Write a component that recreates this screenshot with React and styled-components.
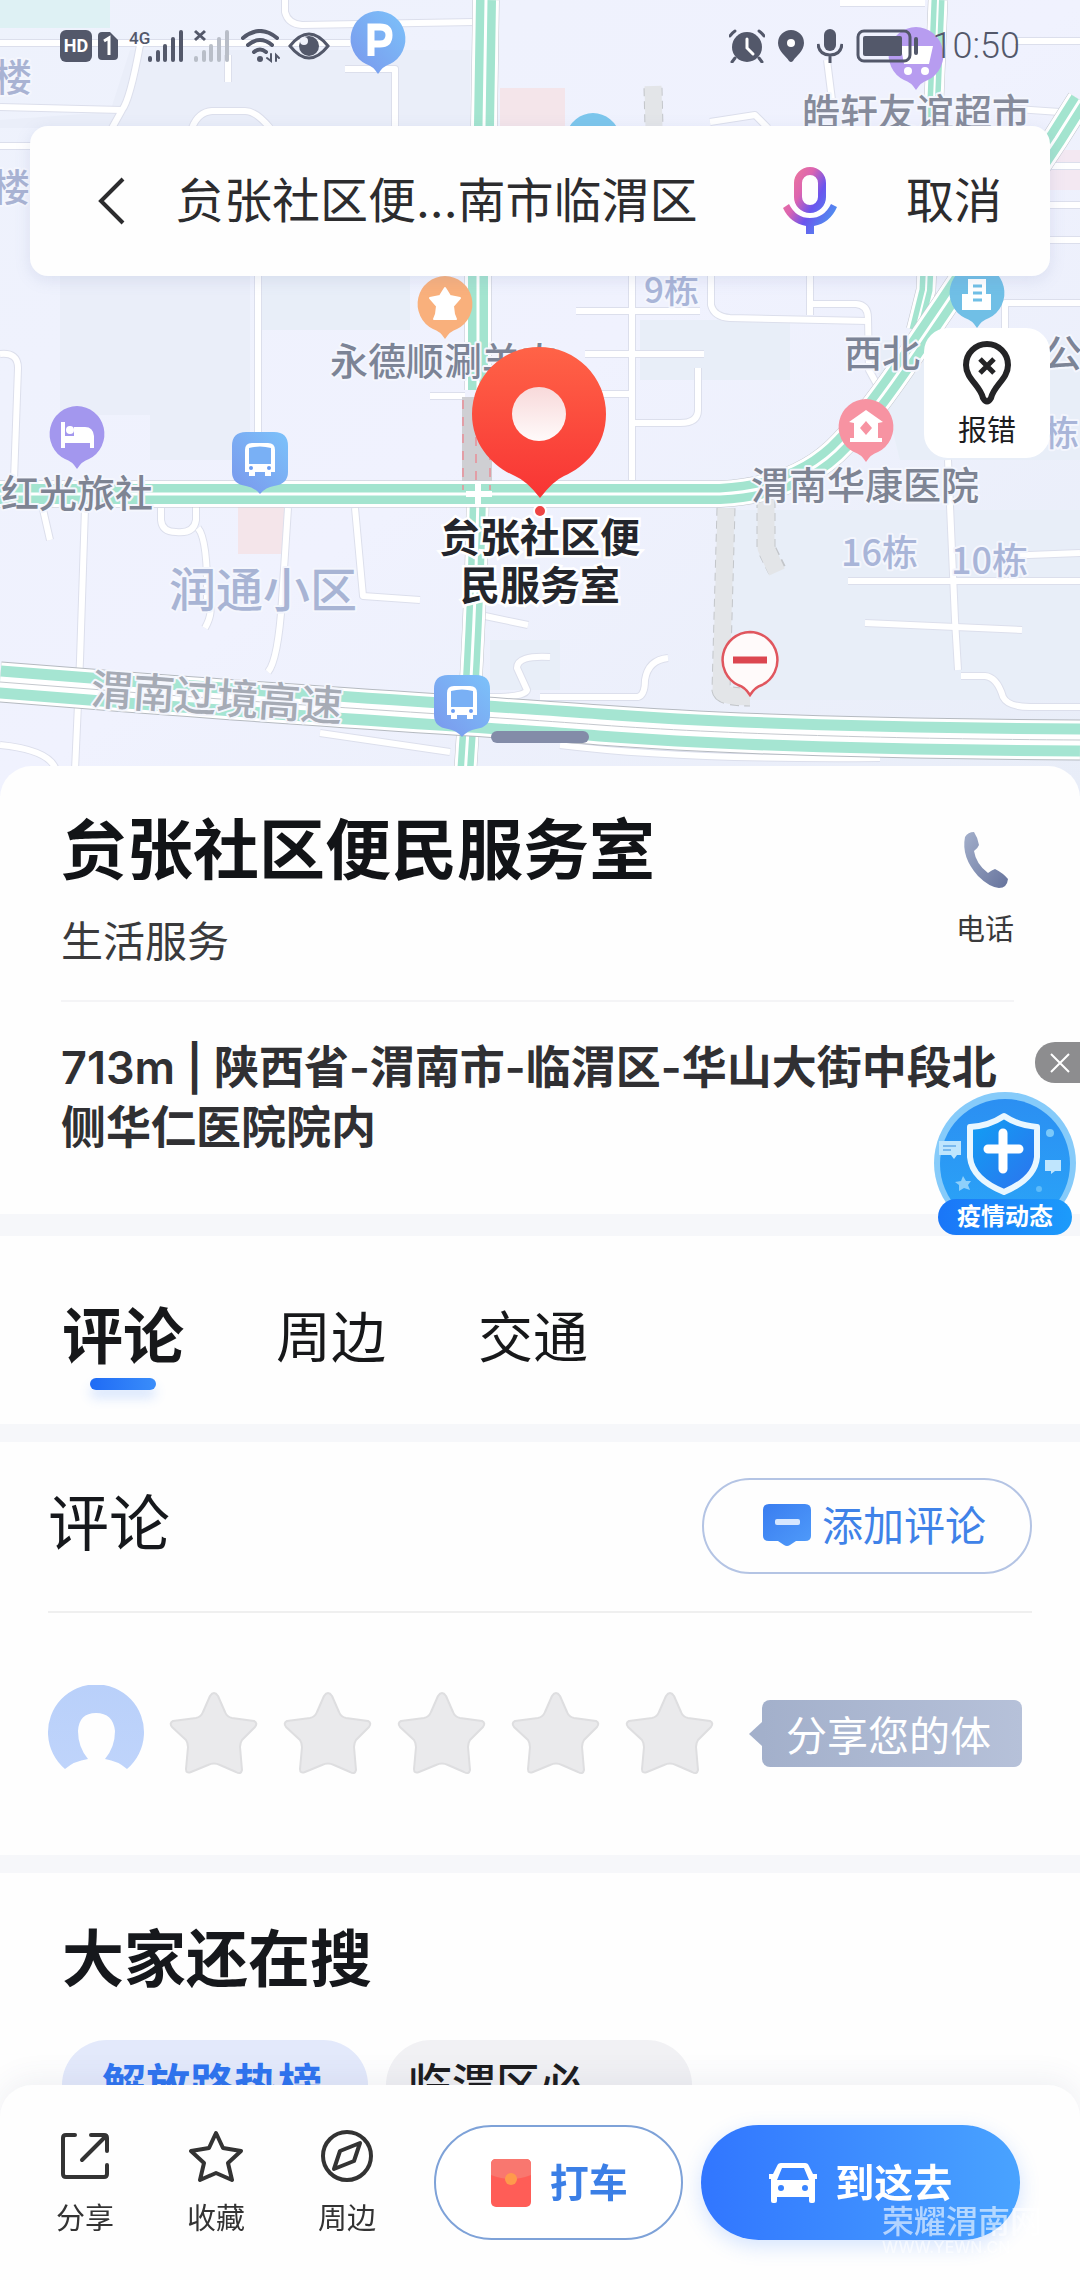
import React, { useState } from 'react'
import styled, { createGlobalStyle } from 'styled-components'

const GlobalStyle = createGlobalStyle`
  * {
    box-sizing: border-box;
  }
  body {
    margin: 0;
    background: #fff;
    color: #16181c;
    font-family: Inter, "Noto Sans CJK SC", sans-serif;
  }
  button, input {
    font-family: inherit;
    color: inherit;
    border: none;
    background: none;
    padding: 0;
    margin: 0;
  }
  button {
    cursor: pointer;
  }
  svg {
    display: block;
    flex-shrink: 0;
  }
  h1, h2, p {
    margin: 0;
  }
`

const Page = styled.div`
  min-height: 100vh;
  padding-bottom: 148px;
  overflow-x: hidden;
`

/* map */

const MapArea = styled.header`
  position: relative;
  display: flex;
  flex-direction: column;
  min-height: 796px;
`
const MapCanvas = styled.svg`
  position: absolute;
  inset: 0;
  width: 100%;
  height: 100%;
  z-index: -1;
`
const StatusBar = styled.div`
  display: flex;
  align-items: center;
  justify-content: space-between;
  height: 92px;
  padding: 0 60px;
  color: #53586a;
`
const StatusGroup = styled.div`
  display: flex;
  align-items: center;
  gap: ${({ $gap }) => $gap}px;
`
const Clock = styled.span`
  font-family: Roboto, sans-serif;
  font-size: 36px;
  font-weight: 300;
  line-height: 36px;
`
const SearchBar = styled.form`
  display: flex;
  align-items: center;
  height: 150px;
  margin: 34px 30px 0;
  padding: 0 48px 0 64px;
  border-radius: 18px;
  background: #fefefe;
  box-shadow: 0 4px 16px rgba(120, 130, 180, 0.16);
`
const SearchInput = styled.input`
  flex: 1;
  min-width: 0;
  margin-left: 48px;
  font-size: 48px;
  line-height: 72px;
  height: 72px;
  color: #2c2c2e;
  outline: none;
`
const IconButton = styled.button`
  display: block;
`
const CancelButton = styled.button`
  margin-left: 68px;
  font-size: 48px;
  line-height: 72px;
  color: #2c2c2e;
`
const ReportButton = styled.button`
  display: flex;
  flex-direction: column;
  align-items: center;
  align-self: flex-end;
  width: 126px;
  height: 130px;
  margin: 52px 30px 0 0;
  padding-top: 13px;
  border-radius: 24px;
  background: #fff;
  font-size: 29px;
  line-height: 36px;
  gap: 8px;
  color: #1c1c1e;
`
const DragHandle = styled.div`
  position: absolute;
  left: 50%;
  bottom: 53px;
  width: 98px;
  height: 12px;
  margin-left: -49px;
  border-radius: 6px;
  background: #838ca8;
`

/* sheet */

const Sheet = styled.main`
  position: relative;
  margin-top: -30px;
  border-radius: 32px 32px 0 0;
  background: #fefefe;
`
const Band = styled.div`
  height: ${({ $tall }) => ($tall ? 22 : 18)}px;
  background: #f6f7fa;
`
const Info = styled.section`
  position: relative;
  padding: 44px 66px 56px 61px;
`
const InfoTop = styled.div`
  display: flex;
  justify-content: space-between;
  padding-bottom: 30px;
  border-bottom: 2px solid #f4f4f6;
`
const Title = styled.h1`
  font-size: 66px;
  line-height: 80px;
  font-weight: 700;
  color: #121417;
`
const Category = styled.p`
  margin-top: 24px;
  font-size: 42px;
  line-height: 56px;
  color: #3a3a3c;
`
const PhoneButton = styled.button`
  display: flex;
  flex-direction: column;
  align-items: center;
  align-self: flex-start;
  gap: 22px;
  padding-top: 20px;
  font-size: 29px;
  line-height: 36px;
  color: #3a3a3c;
`
const Address = styled.p`
  padding-top: 36px;
  font-size: 45px;
  line-height: 60px;
  font-weight: 600;
  color: #303033;
`
const Floating = styled.aside`
  position: absolute;
  top: 276px;
  right: 0;
  display: flex;
  flex-direction: column;
  align-items: flex-end;
  gap: 8px;
`
const CloseButton = styled.button`
  display: flex;
  align-items: center;
  justify-content: center;
  width: 45px;
  height: 41px;
  padding-left: 4px;
  border-radius: 20px 0 0 20px;
  background: #8d8d8f;
`
const EpidemicButton = styled.button`
  display: flex;
  flex-direction: column;
  align-items: center;
  margin-right: 3px;
`
const EpidemicLabel = styled.span`
  position: relative;
  margin-top: -38px;
  width: 134px;
  border-radius: 18px;
  background: linear-gradient(90deg, #1a76f8, #1c9bfb);
  color: #fff;
  font-size: 24px;
  line-height: 36px;
  font-weight: 700;
`

const Tabs = styled.nav`
  display: flex;
  align-items: flex-start;
  gap: 92px;
  padding: 60px 62px 34px;
`
const Tab = styled.button`
  display: flex;
  flex-direction: column;
  align-items: center;
  height: 94px;
  font-size: ${({ $active }) => ($active ? 61 : 55)}px;
  font-weight: ${({ $active }) => ($active ? 700 : 400)};
  line-height: 82px;
  color: #17181a;
  &::after {
    content: "";
    display: ${({ $active }) => ($active ? 'block' : 'none')};
    width: 66px;
    height: 12px;
    border-radius: 6px;
    background: linear-gradient(90deg, #1f6bf5, #3a8dfa);
    box-shadow: 0 8px 12px rgba(58, 130, 250, 0.2);
  }
`

const ReviewHead = styled.div`
  display: flex;
  align-items: center;
  justify-content: space-between;
  margin: 0 48px;
  padding: 36px 0 37px;
  border-bottom: 2px solid #efefef;
`
const ReviewTitle = styled.h2`
  padding-bottom: 4px;
  font-size: 61px;
  line-height: 80px;
  font-weight: 400;
`
const AddReview = styled.button`
  display: flex;
  align-items: center;
  justify-content: center;
  gap: 10px;
  width: 330px;
  height: 96px;
  padding-left: 14px;
  border: 2px solid #b4c4e4;
  border-radius: 48px;
  font-size: 41px;
  line-height: 56px;
  color: #3f82e8;
`
const RatingRow = styled.div`
  display: flex;
  align-items: center;
  gap: 24px;
  padding: 72px 58px 74px 48px;
`
const StarButton = styled.button`
  display: block;
  width: 90px;
`
const Hint = styled.span`
  position: relative;
  margin-left: auto;
  padding: 6px 31px 0 24px;
  border-radius: 8px;
  background: linear-gradient(90deg, #a3b0cb, #b6c1d9);
  color: #fff;
  font-size: 41px;
  line-height: 61px;
  white-space: nowrap;
  &::before {
    content: "";
    position: absolute;
    left: -13px;
    top: 22px;
    border: 12px solid transparent;
    border-left: none;
    border-right: 13px solid #a3b0cb;
  }
`

const More = styled.section`
  padding: 47px 62px 0;
`
const MoreTitle = styled.h2`
  font-size: 62px;
  line-height: 80px;
  font-weight: 700;
`
const Chips = styled.div`
  display: flex;
  gap: 18px;
  margin-top: 40px;
`
const Chip = styled.button`
  min-width: 306px;
  height: 90px;
  padding: 0 ${({ $hot }) => ($hot ? 40 : 22)}px;
  border-radius: 45px;
  background: ${({ $hot }) => ($hot ? '#e3e9fb' : '#f1f1f4')};
  color: ${({ $hot }) => ($hot ? '#2f74f0' : '#1c1c1e')};
  font-size: 44px;
  font-weight: ${({ $hot }) => ($hot ? 700 : 500)};
  line-height: 90px;
  text-align: left;
  white-space: nowrap;
`

/* bottom bar */

const BottomBar = styled.footer`
  position: fixed;
  left: 0;
  right: 0;
  bottom: 0;
  display: flex;
  align-items: center;
  padding: 40px 60px 40px 56px;
  border-radius: 32px 32px 0 0;
  background: #fefefe;
  box-shadow: 0 -6px 30px rgba(60, 80, 110, 0.08);
`
const Actions = styled.div`
  display: flex;
  gap: 73px;
  margin-right: 58px;
`
const Action = styled.button`
  display: flex;
  flex-direction: column;
  align-items: center;
  gap: 18px;
  font-size: 29px;
  line-height: 36px;
  color: #333;
`
const Pills = styled.div`
  display: flex;
  flex: 1;
  gap: 18px;
`
const Pill = styled.button`
  display: flex;
  flex: ${({ $primary }) => ($primary ? 318 : 248)} 1 0;
  align-items: center;
  justify-content: center;
  gap: 18px;
  height: 115px;
  border: 2px solid ${({ $primary }) => ($primary ? 'transparent' : '#7ea2d8')};
  border-radius: 58px;
  background: ${({ $primary }) => ($primary ? 'linear-gradient(90deg, #3176ff, #49a3ff) border-box' : '#fff')};
  box-shadow: ${({ $primary }) => ($primary ? '0 6px 20px rgba(60, 130, 255, 0.22)' : 'none')};
  color: ${({ $primary }) => ($primary ? '#fff' : '#3b7fe6')};
  font-size: 39px;
  line-height: 56px;
  font-weight: 700;
  white-space: nowrap;
`
const Watermark = styled.div`
  position: absolute;
  right: 38px;
  bottom: 26px;
  color: rgba(255, 255, 255, 0.6);
  font-size: 32px;
  font-weight: 500;
  line-height: 36px;
  pointer-events: none;
`
const WatermarkUrl = styled.div`
  font-size: 16px;
  line-height: 14px;
`

const sideRoads = [
  'M285 0 V12 Q288 24 302 25 L475 22',
  'M0 43 H350',
  'M140 45 Q130 100 122 110 L112 128',
  'M0 107 L122 110',
  'M0 146 H40',
  'M228 55 V82',
  'M192 128 Q198 112 212 111 H245 Q256 111 270 128',
  'M345 69 H395 V128',
  'M258 275 V440',
  'M0 354 Q18 352 18 368 L14 480',
  'M430 396 H465',
  'M42 505 L50 540',
  'M85 508 L80 660 L75 770',
  'M161 508 V520 Q162 532 176 532 Q194 534 196 520 V506',
  'M198 528 Q208 540 207 600 Q215 610 205 628',
  'M288 508 L282 600 Q278 660 268 672',
  'M355 508 L363 596 L420 600',
  'M0 745 Q50 750 56 770',
  'M320 733 L450 752',
  'M485 616 L528 625',
  'M550 657 Q517 655 517 668 L527 690 Q526 696 500 697 H460',
  'M540 697 H638 Q645 695 645 680 Q648 660 668 658',
  'M632 270 V480',
  'M576 311 H700',
  'M585 354 H704',
  'M600 394 H632',
  'M698 368 V410 Q698 423 680 423 H635',
  'M711 270 V305 Q714 317 730 318 L868 321',
  'M810 270 V315',
  'M813 304 H856 Q868 305 868 318 L869 370 L880 390',
  'M1005 330 V303 H1080',
  'M948 460 L955 620 L958 670',
  'M848 581 H1080',
  'M1000 556 L1080 553',
  'M865 623 L1022 630',
  'M961 676 H985 Q997 677 1003 697 Q1008 707 1030 707 H1080',
  'M560 745 Q680 760 880 758',
  'M840 3 H925',
  'M827 60 L832 100',
  'M1015 41 H1080',
  'M1000 108 L1060 112',
  'M1050 166 H1080',
  'M1050 205 H1080',
  'M1050 240 H1080',
  'M710 122 L755 115 L768 128',
]

const greenRoads = [
  { d: 'M486 0 L484 126 L478 276 V390', w: 22 },
  { d: 'M478 490 Q476 620 464 790', w: 18 },
  { d: 'M938 0 L934 100 L926 290 L916 330', w: 15 },
  { d: 'M0 494 L720 494 Q800 490 843 443 Q870 415 912 353 L946 303 L1056 138 L1080 100', w: 22 },
]

const Road = ({ d, w }) => (
  <g fill="none">
    <path d={d} stroke="#c2c6ce" strokeWidth={w + 5} />
    <path d={d} stroke="#fff" strokeWidth={w + 4} />
    <path d={d} stroke="#a3e4cf" strokeWidth={w - 2} />
    <path d={d} stroke="#fff" strokeWidth={w > 16 ? 3 : 2} />
  </g>
)

const pinPath = 'M0 -28 A28 28 0 0 1 12 25 Q5 27 0 35 Q-5 27 -12 25 A28 28 0 0 1 0 -28Z'

const Pin = ({ x, y, fill, children }) => (
  <g transform={`translate(${x} ${y})`}>
    <path d={pinPath} fill={fill} />
    {children}
  </g>
)

const BusStop = ({ x, y }) => (
  <g transform={`translate(${x} ${y})`}>
    <path d="M-14 -28 H14 Q28 -28 28 -14 V12 Q28 24 14 26 Q6 27 0 34 Q-6 27 -14 26 Q-28 24 -28 12 V-14 Q-28 -28 -14 -28Z" fill="url(#bus)" />
    <path d="M-15 -10 Q-15 -17 -8 -17 H8 Q15 -17 15 -10 V12 H11 V16 H5 V12 H-5 V16 H-11 V12 H-15Z" fill="#fff" />
    <path d="M-11 -12 Q0 -15 11 -12 V4 H-11Z" fill="#79b0f5" />
    <circle cx="-9" cy="8" r="2" fill="#6a9cf2" />
    <circle cx="9" cy="8" r="2" fill="#6a9cf2" />
  </g>
)

const labels = [
  { x: -6, y: 91, t: '楼', s: 38, c: '#a9b3d3' },
  { x: -8, y: 201, t: '楼', s: 38, c: '#a9b3d3' },
  { x: 802, y: 126, t: '皓轩友谊超市', s: 38, c: '#868b9b' },
  { x: 644, y: 303, t: '9栋', s: 35, c: '#a9b5d8' },
  { x: 330, y: 375, t: '永德顺涮羊肉', s: 38, c: '#7c8496' },
  { x: 844, y: 367, t: '西北', s: 38, c: '#7c8496' },
  { x: 1044, y: 367, t: '公司', s: 38, c: '#7c8496' },
  { x: 1044, y: 446, t: '栋', s: 35, c: '#a9b5d8' },
  { x: 751, y: 499, t: '渭南华康医院', s: 38, c: '#7e8493' },
  { x: 1, y: 507, t: '红光旅社', s: 38, c: '#7e8493' },
  { x: 169, y: 607, t: '润通小区', s: 47, c: '#a8b4d4' },
  { x: 841, y: 566, t: '16栋', s: 36, c: '#a9b5d8' },
  { x: 951, y: 574, t: '10栋', s: 36, c: '#a9b5d8' },
]

const CityMap = () => (
  <MapCanvas viewBox="0 0 1080 796" preserveAspectRatio="xMidYMin slice" aria-hidden="true">
    <defs>
      <linearGradient id="red" x1="0" y1="0" x2="0" y2="1">
        <stop offset="0" stopColor="#ff6347" />
        <stop offset="1" stopColor="#f83434" />
      </linearGradient>
      <linearGradient id="hole" x1="0" y1="0" x2="0" y2="1">
        <stop offset="0" stopColor="#f8d9da" />
        <stop offset="1" stopColor="#fffafa" />
      </linearGradient>
      <linearGradient id="bus" x1="1" y1="0" x2="0" y2="1">
        <stop offset="0" stopColor="#7cc2fa" />
        <stop offset="1" stopColor="#7a97ec" />
      </linearGradient>
      <linearGradient id="land" x1="0" y1="0" x2="1" y2="1">
        <stop offset="0" stopColor="#eef2fc" />
        <stop offset="0.5" stopColor="#f0f2fe" />
        <stop offset="1" stopColor="#e8edf8" />
      </linearGradient>
    </defs>
    <rect width="1080" height="796" fill="url(#land)" />
    <rect width="110" height="28" fill="#def1f4" />
    <path d="M60 276 H250 V460 H150 V415 H60Z M0 120 L110 112 L130 50 H470 V128 H0Z" fill="#eaeef9" />
    <path d="M262 276 H410 V330 H262Z M640 320 H790 V380 H640Z M720 510 H1080 V700 H720Z M870 340 H1080 V460 H900Z M490 640 H560 V690 H490Z" fill="#e8eef8" />
    <path d="M500 88 H565 V128 H500Z M238 506 H284 V554 H238Z" fill="#f4e5ea" />
    <path d="M1050 150 H1080 V190 H1050Z" fill="#f3e8f2" />

    <g fill="none" strokeLinejoin="round">
      {sideRoads.map((d) => <path key={d} d={d} stroke="#dcdfec" strokeWidth="8" />)}
      {sideRoads.map((d) => <path key={d} d={d} stroke="#fff" strokeWidth="6" />)}
    </g>

    <g fill="none" strokeLinejoin="round">
      <path d="M726 508 L721 690 Q722 697 750 697 M766 500 V548 L777 570 M653 88 L654 128" stroke="#c3c6ca" strokeWidth="19" strokeDasharray="8 5" />
      <path d="M726 508 L721 690 Q722 697 750 697 M766 500 V548 L777 572 M653 86 L654 128" stroke="#e3e5e8" strokeWidth="17" />
    </g>

    <path d="M477 397 V490" stroke="#cfcfd3" strokeWidth="30" />
    {greenRoads.map((r) => <Road key={r.d} {...r} />)}
    <path d="M463 400 V490 M476 420 V490 M490 400 V490" stroke="#e98f98" strokeWidth="1.5" strokeDasharray="9 8" />
    <path d="M466 494 H492 M478 484 V506" stroke="#fff" strokeWidth="6" />

    <g fill="none">
      {[['#b5bac0', 41], ['#fff', 39], ['#a5e5d2', 33], ['#fff', 11], ['#c5c9ce', 1]].map(([c, w]) => (
        <path key={w} d="M0 682 L90 689 C300 706 480 716 600 725 S900 739 1080 740" stroke={c} strokeWidth={w} />
      ))}
    </g>

    <g fontFamily="'Noto Sans CJK SC', sans-serif" fontWeight="500" stroke="#f4f6fd" strokeWidth="4" paintOrder="stroke" strokeLinejoin="round">
      {labels.map(({ x, y, t, s, c }) => (
        <text key={`${t}${x}${y}`} x={x} y={y} fontSize={s} fill={c}>{t}</text>
      ))}
      <text x="90" y="704" fontSize="42" fill="#a6abb5" transform="rotate(4 90 704)">渭南过境高速</text>
    </g>

    <Pin x={378} y={39} fill="url(#bus)">
      <path d="M-7 17 V-12 H2 Q11 -12 11 -4 Q11 5 2 5 H-7" fill="none" stroke="#fff" strokeWidth="7" />
    </Pin>
    <Pin x={916} y={55} fill="#b79cf0">
      <path d="M-23 -13 H-16 L-12 9 H13 L17 -9 H-14Z" fill="#fff" />
      <circle cx="-8" cy="16" r="4" fill="#fff" />
      <circle cx="9" cy="16" r="4" fill="#fff" />
    </Pin>
    <Pin x={593} y={141} fill="#7cc6ec" />
    <Pin x={445} y={304} fill="#f9b07c">
      <path d="M0 -16 L5 -8 L15 -6 L8 2 L9 10 L11 15 H-11 L-9 10 L-8 2 L-15 -6 L-5 -8Z" fill="#fff" stroke="#fff" strokeWidth="2" strokeLinejoin="round" />
    </Pin>
    <Pin x={977} y={293} fill="#70bfe6">
      <path d="M-9 -14 H9 V1 H14 V17 H-15 V1 H-9Z" fill="#fff" />
      <path d="M-4 -7 H5 M-4 0 H5 M-4 7 H5" stroke="#70bfe6" strokeWidth="3" />
    </Pin>
    <Pin x={77} y={434} fill="#a397ee">
      <path d="M-14 -12 V14 M15 14 V4" stroke="#fff" strokeWidth="4" />
      <path d="M-15 9 V2 H-3 V-7 H8 Q16 -7 17 2 V9Z" fill="#fff" />
      <circle cx="-7" cy="-4" r="4" fill="#fff" />
    </Pin>
    <Pin x={866} y={427} fill="#f793a2">
      <path d="M-17 -5 L0 -17 L17 -5 L12 -4 V11 H16 V15 H-16 V11 H-12 V-4Z" fill="#fff" />
      <path d="M0 -6 L6 1 L0 8 L-6 1Z" fill="#f793a2" />
    </Pin>
    <BusStop x={260} y={460} />
    <BusStop x={462} y={703} />
    <g transform="translate(750 660)">
      <path d={pinPath} fill="#fffafa" stroke="#e0565e" strokeWidth="2.5" />
      <path d="M-17 0 H17" stroke="#dc4650" strokeWidth="7" />
    </g>

    <path d="M539 347 A67 67 0 0 1 606 414 C606 446 585 467 564 476 Q553 481 540 498 Q527 481 515 476 C494 467 472 446 472 414 A67 67 0 0 1 539 347Z" fill="url(#red)" />
    <circle cx="539" cy="414" r="27" fill="url(#hole)" />
    <circle cx="540" cy="511" r="6" fill="#ee4444" stroke="#fff" strokeWidth="2" />
    <g fontFamily="'Noto Sans CJK SC', sans-serif" fontWeight="700" fontSize="40" fill="#24262c" stroke="#fff" strokeWidth="5" paintOrder="stroke" textAnchor="middle">
      <text x="540" y="552">贠张社区便</text>
      <text x="540" y="600">民服务室</text>
    </g>
  </MapCanvas>
)

const bars = [[0, 27, 6], [8, 21, 12], [15, 15, 18], [23, 8, 25], [31, 1, 32]]

const SignalBars = ({ x, color }) => (
  <g transform={`translate(${x} 0)`} fill={color}>
    {bars.map(([left, top, h]) => <rect key={left} x={left} y={top} width="4" height={h} rx="2" />)}
  </g>
)

const Status = () => (
  <StatusBar>
    <StatusGroup $gap={6}>
      <svg width="32" height="32" viewBox="0 0 32 32">
        <rect width="32" height="32" rx="6" fill="currentColor" />
        <text x="16" y="22" fontFamily="Roboto, sans-serif" fontSize="18" fontWeight="700" fill="#fff" textAnchor="middle">HD</text>
      </svg>
      <svg width="20" height="28" viewBox="0 0 20 28">
        <path d="M4 0 H12 L20 8 V24 Q20 28 16 28 H4 Q0 28 0 24 V4 Q0 0 4 0Z" fill="currentColor" />
        <path d="M6 9 L11 6 V23" stroke="#fff" strokeWidth="3" fill="none" />
      </svg>
      <svg width="60" height="34" viewBox="0 0 60 34">
        <text x="5" y="15" fontFamily="Roboto, sans-serif" fontSize="17" fontWeight="500" fill="currentColor">4G</text>
        <SignalBars x={24} color="currentColor" />
      </svg>
      <svg width="44" height="34" viewBox="0 0 44 34">
        <path d="M5 2 L15 11 M15 2 L5 11" stroke="currentColor" strokeWidth="3" />
        <SignalBars x={4} color="#b9bec8" />
      </svg>
      <svg width="42" height="34" viewBox="0 0 42 34" fill="none" stroke="currentColor" strokeWidth="4" strokeLinecap="round">
        <path d="M3 9 Q20 -5 37 9 M8 16 Q20 6 32 16 M14 23 Q20 18 26 23" />
        <circle cx="20" cy="30" r="3" fill="currentColor" stroke="none" />
        <path d="M31 25 V32 L27 29 M36 32 V26 L39 29" strokeWidth="2" />
      </svg>
      <svg width="42" height="28" viewBox="0 0 42 28">
        <path d="M2 14 Q21 -10 40 14 Q21 38 2 14Z" fill="none" stroke="currentColor" strokeWidth="3" />
        <circle cx="21" cy="14" r="10" fill="currentColor" />
        <circle cx="16" cy="9" r="4" fill="#f0f2fb" />
      </svg>
    </StatusGroup>
    <StatusGroup $gap={13}>
      <svg width="36" height="34" viewBox="0 0 36 34" fill="none" stroke="currentColor" strokeLinecap="round">
        <circle cx="18" cy="18" r="15" fill="currentColor" stroke="none" />
        <path d="M1 7 Q3 4 6 2 M35 7 Q33 4 30 2 M6 29 L3 33 M30 29 L33 33" strokeWidth="3" />
        <path d="M18 10 V19 L24 25" stroke="#fff" strokeWidth="3" />
      </svg>
      <svg width="26" height="32" viewBox="0 0 26 32">
        <path d="M13 0 A13 13 0 0 1 26 13 C26 21 18 26 15 31 Q13 33 11 31 C8 26 0 21 0 13 A13 13 0 0 1 13 0Z" fill="currentColor" />
        <circle cx="13" cy="13" r="4" fill="#fff" />
      </svg>
      <svg width="26" height="34" viewBox="0 0 26 34">
        <rect x="7" y="0" width="12" height="22" rx="6" fill="currentColor" />
        <path d="M1 15 Q2 26 13 26 Q24 26 25 15 M13 26 V34" fill="none" stroke="currentColor" strokeWidth="3" />
      </svg>
      <svg width="64" height="34" viewBox="0 0 64 34">
        <rect x="2" y="2" width="52" height="30" rx="6" fill="none" stroke="currentColor" strokeWidth="3" />
        <rect x="7" y="7" width="39" height="20" rx="2" fill="currentColor" />
        <rect x="58" y="8" width="4" height="18" rx="2" fill="currentColor" />
      </svg>
      <Clock>10:50</Clock>
    </StatusGroup>
  </StatusBar>
)

const Star = () => (
  <svg width="90" height="86" viewBox="0 0 90 86">
    <path d="M42 6 Q46 0 50 6 L57 22 Q59 27 64 28 L86 31 Q90 33 87 37 L74 50 Q72 53 72 57 L74 80 Q73 85 68 82 L52 75 Q46 72 40 75 L23 82 Q18 84 18 79 L20 57 Q20 53 18 50 L4 37 Q1 33 5 31 L28 28 Q33 27 35 22Z" fill="#eaeaec" stroke="#dedee0" strokeWidth="2" strokeLinejoin="round" />
  </svg>
)

const EpidemicIcon = () => (
  <svg width="144" height="146" viewBox="0 0 144 146">
    <defs>
      <linearGradient id="ball" x1="0" y1="0" x2="0" y2="1">
        <stop offset="0" stopColor="#2b8ff2" />
        <stop offset="1" stopColor="#2aa5f8" />
      </linearGradient>
      <linearGradient id="shield" x1="0" y1="0" x2="1" y2="1">
        <stop offset="0" stopColor="#10a0f4" />
        <stop offset="1" stopColor="#2d72ee" />
      </linearGradient>
    </defs>
    <circle cx="72" cy="72" r="71" fill="#86cbfa" />
    <circle cx="72" cy="73" r="65" fill="url(#ball)" />
    <path d="M71 25 Q86 35 104 36 V66 Q102 88 71 101 Q39 88 37 66 V36 Q56 35 71 25Z" fill="url(#shield)" stroke="#e9f7ff" strokeWidth="6" strokeLinejoin="round" />
    <path d="M70 42 V78 M55 58 H86" stroke="#fff" strokeWidth="9" strokeLinecap="round" />
    <path d="M6 50 H28 V64 H24 L21 68 L18 64 H6Z M112 69 H128 V80 H122 L118 83 V80 H112Z" fill="#bfe5fd" />
    <path d="M10 55 H23 M10 59 H18" stroke="#79b9ee" strokeWidth="2" />
    <path d="M30 85 L33 90 L38 90 L35 94 L37 99 L31 97 L26 100 L26 94 L22 91 L28 90Z" fill="#8ed0fb" />
    <circle cx="117" cy="42" r="4" fill="#7cc9fa" />
    <circle cx="106" cy="98" r="3" fill="#5fbcf9" />
  </svg>
)

const tabs = ['评论', '周边', '交通']

const App = () => {
  const [tab, setTab] = useState('评论')
  const [showFloat, setShowFloat] = useState(true)

  return (
    <Page>
      <GlobalStyle />
      <MapArea>
        <CityMap />
        <Status />
        <SearchBar onSubmit={(e) => e.preventDefault()}>
          <IconButton type="button" aria-label="返回">
            <svg width="34" height="50" viewBox="0 0 34 50">
              <path d="M29 3 L7 25 L29 47" fill="none" stroke="#2c2c2e" strokeWidth="4" />
            </svg>
          </IconButton>
          <SearchInput aria-label="搜索" defaultValue="贠张社区便...南市临渭区" />
          <IconButton type="button" aria-label="语音">
            <svg width="56" height="68" viewBox="0 0 56 68">
              <defs>
                <linearGradient id="mic" x1="0" y1="0.1" x2="1" y2="0.8">
                  <stop offset="0" stopColor="#f27d92" />
                  <stop offset="0.35" stopColor="#dc64b0" />
                  <stop offset="0.6" stopColor="#6a55ee" />
                  <stop offset="1" stopColor="#4a9af0" />
                </linearGradient>
              </defs>
              <path fillRule="evenodd" d="M28 0 A16 16 0 0 1 44 16 V30 A16 16 0 0 1 12 30 V16 A16 16 0 0 1 28 0Z M28 8 A8 8 0 0 0 20 16 V30 A8 8 0 0 0 36 30 V16 A8 8 0 0 0 28 8Z M1 41 L7 37 Q14 51 28 51 Q42 51 49 37 L55 40 Q48 56 32 59 V67 H24 V59 Q8 56 1 41Z" fill="url(#mic)" />
            </svg>
          </IconButton>
          <CancelButton type="button">取消</CancelButton>
        </SearchBar>
        <ReportButton>
          <svg width="50" height="64" viewBox="0 0 50 64" fill="none" stroke="#242426" strokeLinejoin="round">
            <path d="M25 3 A21 21 0 0 1 46 24 C46 38 32 44 29 57 Q25 64 21 57 C18 44 4 38 4 24 A21 21 0 0 1 25 3Z" strokeWidth="6" />
            <path d="M18 18 L32 32 M32 18 L18 32" strokeWidth="5" />
          </svg>
          报错
        </ReportButton>
        <DragHandle />
      </MapArea>

      <Sheet>
        <Info>
          <InfoTop>
            <div>
              <Title>贠张社区便民服务室</Title>
              <Category>生活服务</Category>
            </div>
            <PhoneButton>
              <svg width="48" height="60" viewBox="0 0 48 60">
                <defs>
                  <linearGradient id="phone" x1="0" y1="0" x2="1" y2="1">
                    <stop offset="0" stopColor="#a3afcb" />
                    <stop offset="1" stopColor="#66739c" />
                  </linearGradient>
                </defs>
                <path d="M4 7 Q7 2 13 2 Q17 8 18 15 Q17 18 13 21 Q15 34 27 43 Q31 40 34 39 Q42 43 47 49 Q46 58 38 58 Q28 57 17 46 Q0 27 4 7Z" fill="url(#phone)" />
              </svg>
              电话
            </PhoneButton>
          </InfoTop>
          <Address>713m | 陕西省-渭南市-临渭区-华山大街中段北侧华仁医院院内</Address>
          {showFloat && (
            <Floating>
              <CloseButton aria-label="关闭" onClick={() => setShowFloat(false)}>
                <svg width="20" height="20" viewBox="0 0 20 20">
                  <path d="M1 1 L19 19 M19 1 L1 19" stroke="#fff" strokeWidth="2" />
                </svg>
              </CloseButton>
              <EpidemicButton>
                <EpidemicIcon />
                <EpidemicLabel>疫情动态</EpidemicLabel>
              </EpidemicButton>
            </Floating>
          )}
        </Info>
        <Band $tall />

        <Tabs>
          {tabs.map((name) => (
            <Tab key={name} $active={name === tab} onClick={() => setTab(name)}>{name}</Tab>
          ))}
        </Tabs>
        <Band />

        <section>
          <ReviewHead>
            <ReviewTitle>评论</ReviewTitle>
            <AddReview>
              <svg width="50" height="46" viewBox="0 0 50 46">
                <defs>
                  <linearGradient id="bubble" x1="0" y1="0" x2="1" y2="1">
                    <stop offset="0" stopColor="#3a7df0" />
                    <stop offset="1" stopColor="#4f9bfa" />
                  </linearGradient>
                </defs>
                <path d="M7 1 H43 Q49 1 49 7 V33 Q49 38 43 38 H34 L28 42 Q25 44 22 42 L16 38 H7 Q1 38 1 33 V7 Q1 1 7 1Z" fill="url(#bubble)" />
                <rect x="13" y="16" width="25" height="6" rx="2" fill="#d5e6ff" />
              </svg>
              添加评论
            </AddReview>
          </ReviewHead>
          <RatingRow>
            <svg width="96" height="96" viewBox="0 0 96 96">
              <defs>
                <linearGradient id="face" x1="0" y1="0" x2="0" y2="1">
                  <stop offset="0" stopColor="#b9d0fa" />
                  <stop offset="1" stopColor="#bfd4fb" />
                </linearGradient>
              </defs>
              <path d="M17 84 A48 48 0 1 1 79 84 Q70 76 57 74 Q67 62 67 46 Q65 28 48 28 Q31 28 30 46 Q30 62 40 74 Q26 76 17 84Z" fill="url(#face)" />
            </svg>
            {[1, 2, 3, 4, 5].map((n) => (
              <StarButton key={n} aria-label={`${n}星`}><Star /></StarButton>
            ))}
            <Hint>分享您的体</Hint>
          </RatingRow>
        </section>
        <Band />

        <More>
          <MoreTitle>大家还在搜</MoreTitle>
          <Chips>
            <Chip $hot>解放路热榜</Chip>
            <Chip>临渭区必</Chip>
          </Chips>
        </More>
      </Sheet>

      <BottomBar>
        <Actions>
          <Action>
            <svg width="54" height="54" viewBox="0 0 54 54" fill="none" stroke="currentColor" strokeWidth="4" strokeLinecap="round" strokeLinejoin="round">
              <path d="M17 6 H8 Q5 6 5 9 V45 Q5 48 8 48 H46 Q49 48 49 45 V36 M33 6 H46 Q49 6 49 9 V22 M48 7 L24 31" />
            </svg>
            分享
          </Action>
          <Action>
            <svg width="54" height="54" viewBox="0 0 54 54" fill="none" stroke="currentColor" strokeWidth="4" strokeLinejoin="round">
              <path d="M27 4 L34 19 L52 22 L39 34 L43 51 L27 44 L11 51 L15 34 L2 22 L20 19Z" />
            </svg>
            收藏
          </Action>
          <Action>
            <svg width="54" height="54" viewBox="0 0 54 54" fill="none" stroke="currentColor" strokeWidth="4" strokeLinejoin="round">
              <circle cx="27" cy="27" r="24" />
              <path d="M40 14 L34 32 L14 40 L20 22Z" />
            </svg>
            周边
          </Action>
        </Actions>
        <Pills>
          <Pill>
            <svg width="42" height="50" viewBox="0 0 42 50">
              <rect x="1" y="1" width="40" height="48" rx="5" fill="#ff5d57" />
              <path d="M6 1 H36 Q41 1 41 6 V17 Q21 25 1 17 V6 Q1 1 6 1Z" fill="#f9776f" />
              <circle cx="21" cy="21" r="6" fill="#ff9a4c" />
            </svg>
            打车
          </Pill>
          <Pill $primary>
            <svg width="48" height="42" viewBox="0 0 48 42" fill="#fff">
              <path fillRule="evenodd" d="M12 1 H36 Q39 1 40 4 L44 12 H48 V17 H46 V39 Q46 41 44 41 H42 Q40 41 40 39 V35 H8 V39 Q8 41 6 41 H4 Q2 41 2 39 V17 H0 V12 H4 L8 4 Q9 1 12 1Z M13 6 L8 18 H40 L35 6Z M12 23 A3 3 0 1 0 12 29 A3 3 0 1 0 12 23Z M36 23 A3 3 0 1 0 36 29 A3 3 0 1 0 36 23Z" />
            </svg>
            到这去
          </Pill>
        </Pills>
        <Watermark>
          荣耀渭南网
          <WatermarkUrl>WWW.YEWN.CN</WatermarkUrl>
        </Watermark>
      </BottomBar>
    </Page>
  )
}

export default App
